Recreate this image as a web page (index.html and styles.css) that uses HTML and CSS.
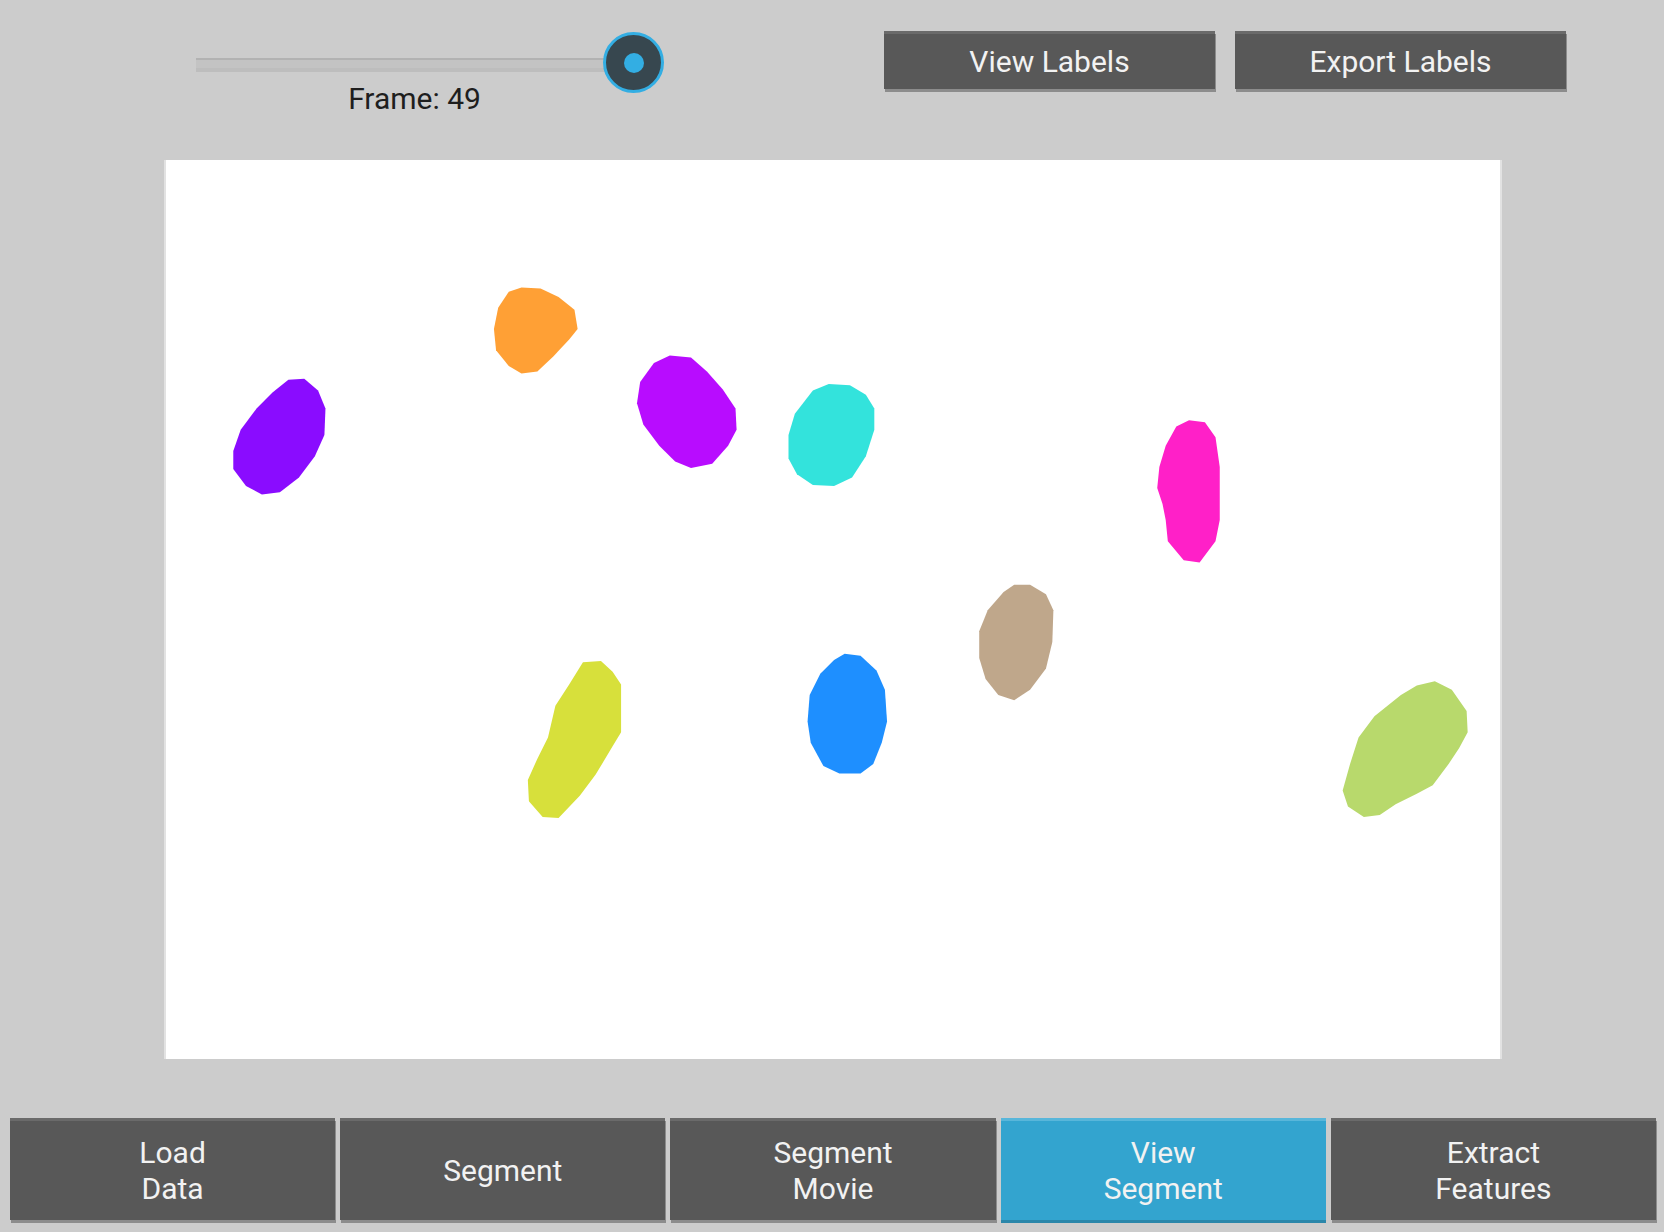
FILE: index.html
```html
<!DOCTYPE html>
<html>
<head>
<meta charset="utf-8">
<link rel="stylesheet" href="styles.css">
</head>
<body>
<div class="app">
  <header class="topbar">
    <div class="slider-block">
      <div class="slider">
        <div class="track"></div>
        <div class="thumb"><div class="dot"></div></div>
      </div>
      <div class="frame-label">Frame: 49</div>
    </div>
    <div class="top-actions">
      <button class="btn top-btn">View Labels</button>
      <button class="btn top-btn">Export Labels</button>
    </div>
  </header>

  <main class="viewer">
    <div class="canvas">
      <svg class="cells" viewBox="154.5 150.8 1259 847.2" preserveAspectRatio="none">
        <polygon fill="#8a0cff" points="270,358 285,357 298,368 305,385 304,410 295,430 280,450 262,464 245,466 230,458 218,442 218,425 225,405 240,385 255,370"/>
        <polygon fill="#ffa035" points="478,275 490,271 508,272 525,280 540,292 543,310 535,320 520,336 505,350 490,352 478,345 466,330 464,310 468,290"/>
        <polygon fill="#b80cff" points="615,342 630,335 650,337 665,350 680,367 692,385 693,405 685,420 670,437 650,441 635,435 620,420 605,400 599,380 602,360"/>
        <polygon fill="#33e3dc" points="765,368 780,362 800,363 815,372 823,385 823,405 815,430 802,450 785,458 765,457 750,447 742,432 742,410 748,390"/>
        <polygon fill="#ff20c8" points="1108,402 1120,396 1135,398 1145,412 1149,440 1149,490 1145,510 1130,530 1115,528 1100,510 1098,490 1095,475 1090,460 1092,440 1098,420"/>
        <polygon fill="#bfa78b" points="945,558 955,551 970,551 985,560 992,575 991,605 985,630 970,650 955,660 940,655 928,640 922,620 922,595 930,575"/>
        <polygon fill="#d7e03b" points="548,624 565,623 576,633 584,645 584,690 575,705 560,730 545,750 525,771 510,770 497,755 496,735 505,715 515,695 522,665 535,645"/>
        <polygon fill="#1e8fff" points="785,622 795,616 810,618 825,632 833,650 835,680 830,700 822,720 810,729 790,729 775,722 763,700 760,680 762,655 772,635"/>
        <polygon fill="#b8d96c" points="1320,655 1335,646 1352,642 1368,650 1382,670 1383,690 1375,705 1365,720 1350,740 1335,748 1315,758 1300,768 1285,770 1270,760 1265,745 1272,720 1280,695 1295,675"/>
      </svg>
    </div>
  </main>

  <nav class="bottombar">
    <button class="btn nav-btn">Load<br>Data</button>
    <button class="btn nav-btn">Segment</button>
    <button class="btn nav-btn">Segment<br>Movie</button>
    <button class="btn nav-btn active">View<br>Segment</button>
    <button class="btn nav-btn">Extract<br>Features</button>
  </nav>
</div>
</body>
</html>
```

FILE: styles.css
```css
* { box-sizing: border-box; }

html, body {
  margin: 0;
  padding: 0;
  background: #cccccc;
  font-family: Roboto, "Liberation Sans", Arial, sans-serif;
}

.app {
  width: 1664px;
  height: 1232px;
  display: flex;
  flex-direction: column;
}

/* ---------- top bar ---------- */
.topbar {
  height: 160px;
  display: flex;
  align-items: flex-start;
}

.slider-block {
  margin-left: 166px;
  margin-top: 32px;
  width: 497px;
  display: flex;
  flex-direction: column;
  align-items: center;
}

.slider {
  position: relative;
  width: 100%;
  height: 61px;
}

.track {
  margin: 26px 30px 0 30px;
  height: 14px;
  background: linear-gradient(to bottom,
    #b2b2b2 0, #b2b2b2 2px,
    #c3c3c3 2px, #c3c3c3 10px,
    #bdbdbd 10px, #bdbdbd 14px);
}

.thumb {
  position: absolute;
  left: 437px;
  top: 0;
  width: 61px;
  height: 61px;
  border-radius: 50%;
  background: #37474f;
  border: 3px solid #33aee3;
  display: flex;
  align-items: center;
  justify-content: center;
}

.dot {
  width: 20px;
  height: 20px;
  border-radius: 50%;
  background: #33aee3;
}

.frame-label {
  margin-top: -12px;
  font-size: 30px;
  line-height: 36px;
  color: #1e1e1e;
}

.top-actions {
  margin-left: 221px;
  margin-top: 31px;
  display: flex;
  gap: 20px;
}

/* ---------- buttons ---------- */
.btn {
  font-family: Roboto, "Liberation Sans", Arial, sans-serif;
  color: #f2f2f2;
  background: #585858;
  border: none;
  border-top: 3px solid #6a6a6a;
  box-shadow: 1px 3px 0 #8c8c8c;
  padding: 0;
  margin: 0;
  cursor: pointer;
}

.top-btn {
  width: 331px;
  height: 58px;
  font-size: 30px;
  line-height: 36px;
}

/* ---------- viewer ---------- */
.viewer {
  height: 899px;
  display: flex;
  justify-content: center;
}

.canvas {
  margin-left: 2px;
  width: 1338px;
  height: 899px;
  background: #ffffff;
  border-left: 2px solid #e2e2e2;
  border-right: 2px solid #e2e2e2;
}

.cells {
  display: block;
  width: 100%;
  height: 100%;
}

/* ---------- bottom bar ---------- */
.bottombar {
  margin-top: 59px;
  padding: 0 8px 0 10px;
  display: flex;
  gap: 5px;
}

.nav-btn {
  flex: 1;
  height: 102px;
  font-size: 30px;
  line-height: 36px;
}

.nav-btn.active {
  background: #33a4cf;
  border-top-color: #58b6da;
  box-shadow: 0 3px 0 #2b87aa;
}
```
